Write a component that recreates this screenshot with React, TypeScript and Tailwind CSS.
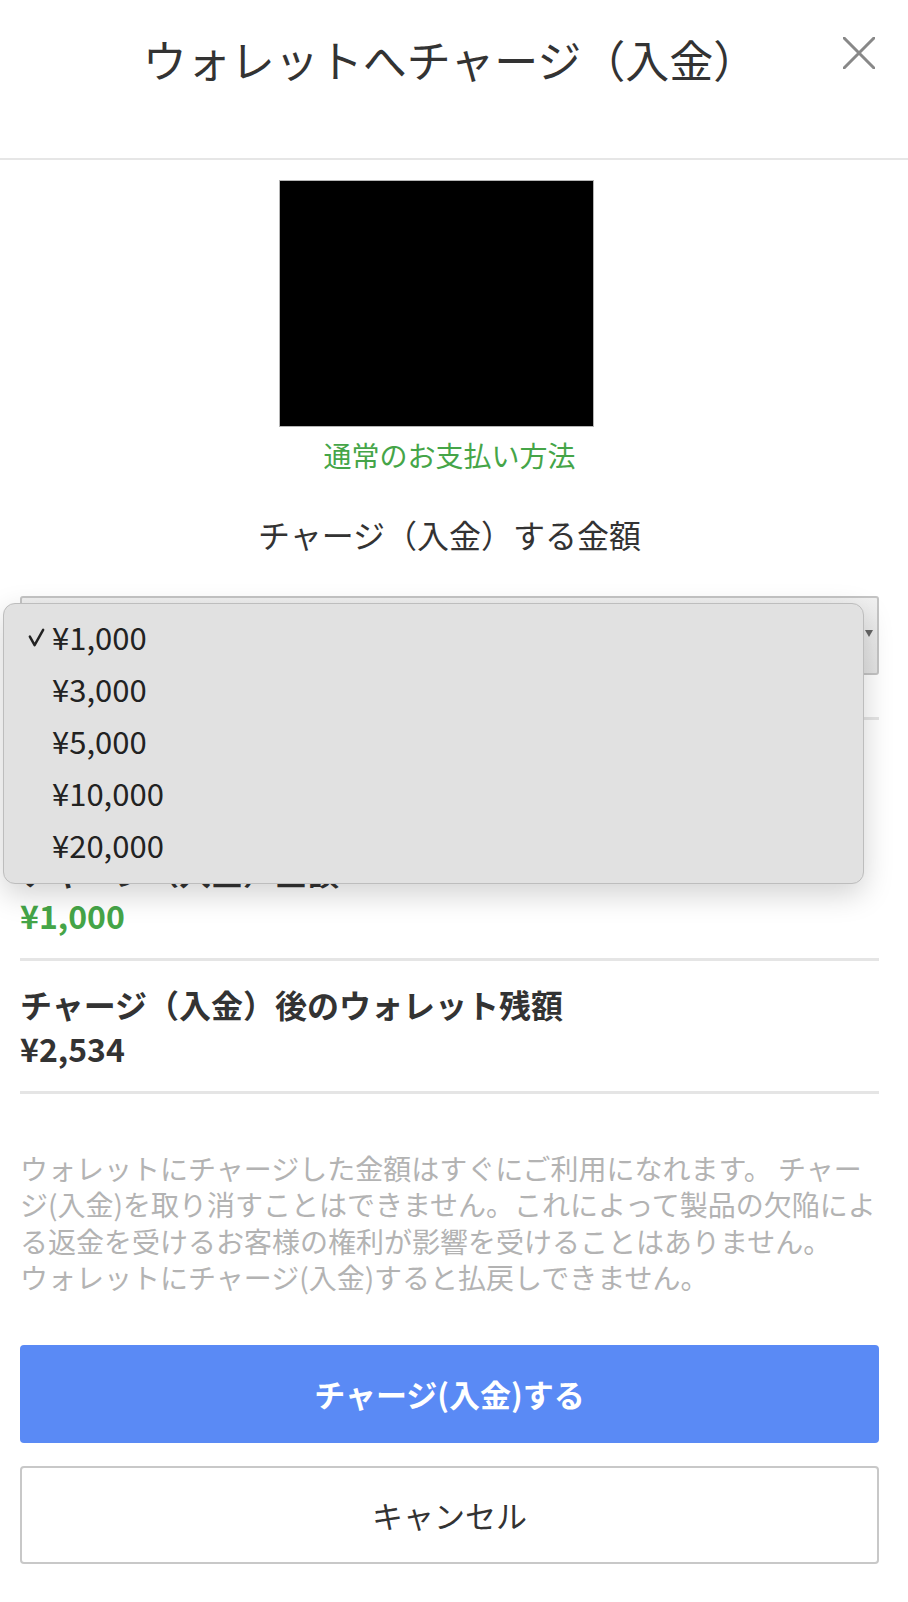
import React from "react";

const amounts = ["¥1,000", "¥3,000", "¥5,000", "¥10,000", "¥20,000"];

export default function App() {
  return (
    <div className="w-[908px] min-h-[1602px] bg-white font-['Noto_Sans_CJK_JP','Noto_Sans',sans-serif] text-[#333]">
      {/* Header */}
      <div className="relative h-[160px] border-b-[2px] border-[#e6e6e6]">
        <div className="pt-[26px] pr-[8px] text-center text-[44px] leading-[66px] text-[#333]">
          ウォレットへチャージ（入金）
        </div>
        <button className="absolute left-[843px] top-[37px] h-[32px] w-[32px]" aria-label="close">
          <svg viewBox="0 0 32 32" className="h-[32px] w-[32px]">
            <path d="M1 1 L31 31 M31 1 L1 31" stroke="#888" strokeWidth="3" strokeLinecap="round" />
          </svg>
        </button>
      </div>

      <div className="pl-[20px] pr-[29px]">
        {/* Card image */}
        <div className="mt-[20px] flex justify-center pr-[26px]">
          <div className="h-[247px] w-[315px] border border-[#b5b5b5] bg-black" />
        </div>
        <div className="mt-[7px] text-center text-[28px] leading-[42px] text-[#45a548]">通常のお支払い方法</div>

        <div className="mt-[34px] text-center text-[32px] leading-[48px] text-[#333]">チャージ（入金）する金額</div>

        {/* Select with open dropdown */}
        <div className="relative mt-[38px]">
          <div className="flex h-[79px] items-center justify-end rounded-[3px] border-[2px] border-[#c4c4c4] bg-gradient-to-b from-[#f0f0f0] to-[#e3e3e3] pl-[20px] pr-[4px]">
            <svg viewBox="0 0 8 8" className="mb-[6px] h-[8px] w-[8px]">
              <path d="M0 1 L8 1 L4 8 Z" fill="#666" />
            </svg>
          </div>
          <div className="absolute left-[-17px] top-[7px] z-10 h-[281px] w-[861px] rounded-[12px] border border-[#bdbdbd] bg-[#e1e1e1] pt-[7px] shadow-[0_10px_30px_rgba(0,0,0,0.18)]">
            {amounts.map((a, i) => (
              <div key={a} className="flex h-[52px] items-center text-[31px] leading-[52px] text-[#222]">
                <span className="flex w-[48px] justify-end pr-[6px]">
                  {i === 0 && (
                    <svg viewBox="0 0 20 20" className="h-[19px] w-[19px]">
                      <path d="M3 9 L8 18 L17 2" fill="none" stroke="#222" strokeWidth="2.6" strokeLinecap="round" strokeLinejoin="round" />
                    </svg>
                  )}
                </span>
                <span>{a}</span>
              </div>
            ))}
          </div>
        </div>

        {/* Rows */}
        <div className="mt-[42px] border-t-[3px] border-[#e5e5e5] py-[21px]">
          <div className="h-[108px]" />
          <div className="text-[32px] font-bold leading-[44px] text-[#333]">チャージ（入金）金額</div>
          <div className="text-[32px] font-bold leading-[44px] text-[#45a548]">¥1,000</div>
        </div>
        <div className="border-t-[3px] border-b-[3px] border-[#e5e5e5] py-[21px]">
          <div className="text-[32px] font-bold leading-[44px] text-[#333]">チャージ（入金）後のウォレット残額</div>
          <div className="text-[32px] font-bold leading-[44px] text-[#333]">¥2,534</div>
        </div>

        {/* Notice */}
        <p className="mt-[56px] whitespace-nowrap text-[28px] leading-[36.3px] text-[#b3b3b3]">
          ウォレットにチャージした金額はすぐにご利用になれます。 チャー
          <br />
          ジ(入金)を取り消すことはできません。これによって製品の欠陥によ
          <br />
          る返金を受けるお客様の権利が影響を受けることはありません。
          <br />
          ウォレットにチャージ(入金)すると払戻しできません。
        </p>

        {/* Buttons */}
        <button className="mt-[50px] flex h-[98px] w-full items-center justify-center rounded-[4px] bg-[#5a8af5] text-[31px] font-bold text-white">
          チャージ(入金)する
        </button>
        <button className="mt-[23px] flex h-[98px] w-full items-center justify-center rounded-[4px] border-[2px] border-[#c8c8c8] bg-white text-[31px] text-[#333]">
          キャンセル
        </button>
      </div>
    </div>
  );
}
